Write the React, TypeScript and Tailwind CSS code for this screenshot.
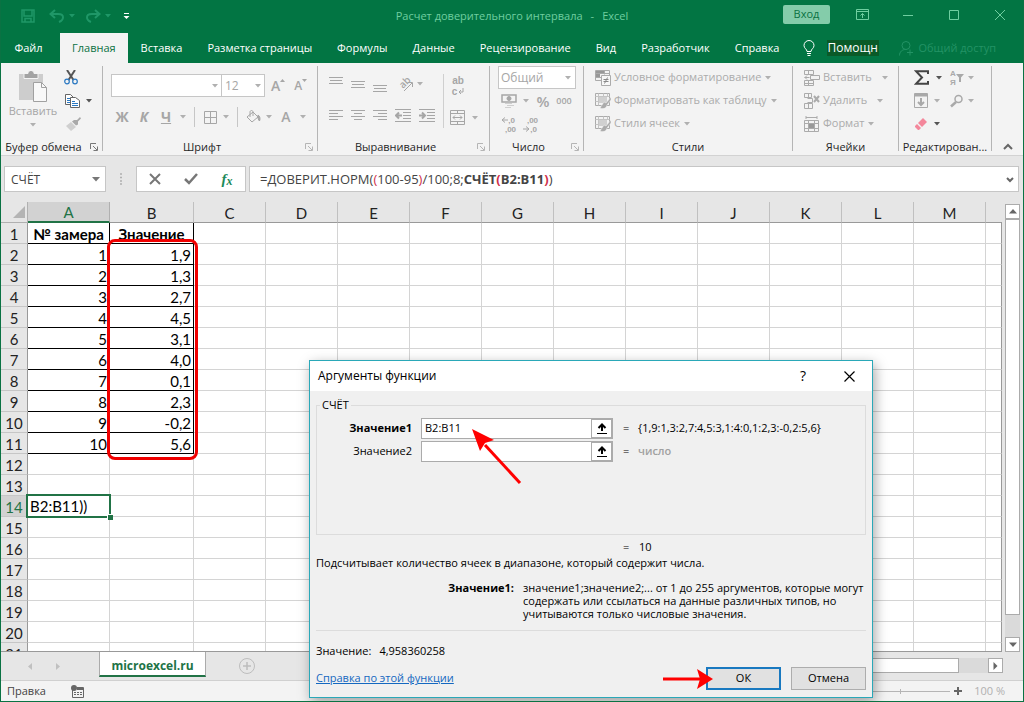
import { useState } from "react";
import type { ReactNode } from "react";

const tabs = [
  "Главная",
  "Вставка",
  "Разметка страницы",
  "Формулы",
  "Данные",
  "Рецензирование",
  "Вид",
  "Разработчик",
  "Справка",
];

const columns = ["A", "B", "C", "D", "E", "F", "G", "H", "I", "J", "K", "L", "M"];
const rowCount = 21;

const measurements = ["1,9", "1,3", "2,7", "4,5", "3,1", "4,0", "0,1", "2,3", "-0,2", "5,6"];

function Icon({
  w = 16,
  h = 16,
  className = "",
  children,
}: {
  w?: number;
  h?: number;
  className?: string;
  children: ReactNode;
}) {
  return (
    <svg
      width={w}
      height={h}
      viewBox={`0 0 ${w} ${h}`}
      fill="none"
      stroke="currentColor"
      className={`shrink-0 ${className}`}
      aria-hidden="true"
    >
      {children}
    </svg>
  );
}

function Caret({ className = "text-[#b0b0b0]" }: { className?: string }) {
  return (
    <Icon w={6} h={4} className={className}>
      <path d="M0 0h6L3 3.5z" fill="currentColor" stroke="none" />
    </Icon>
  );
}

function Tool({
  label,
  className = "",
  children,
}: {
  label: string;
  className?: string;
  children: ReactNode;
}) {
  return (
    <button aria-label={label} className={`flex items-center justify-center ${className}`}>
      {children}
    </button>
  );
}

function Group({
  title,
  width,
  launcher,
  children,
}: {
  title: string;
  width: string;
  launcher?: string;
  children: ReactNode;
}) {
  return (
    <section className={`flex shrink-0 pt-[3px] ${width}`}>
      <div className="flex min-w-0 flex-1 flex-col">
        <div className="h-[73px]">{children}</div>
        <div className="flex h-4 items-center">
          <h2 className="grow text-center whitespace-nowrap text-[#262626]">{title}</h2>
          {launcher && (
            <Tool label={`${title}: параметры`} className={`w-4 ${launcher}`}>
              <Icon w={8} h={8}>
                <path d="M.5 6V.5H6M3 3l4 4M7.5 3.5v4h-4" />
              </Icon>
            </Tool>
          )}
        </div>
      </div>
      <span className="h-[85px] w-px bg-[#b5b5b5]" />
    </section>
  );
}

function Lines({ widths, top = 0 }: { widths: [number, number][]; top?: number }) {
  return (
    <Icon w={14} h={16}>
      {widths.map(([x, w], i) => (
        <path key={i} d={`M${x} ${top + i * 3 + 0.5}h${w}`} />
      ))}
    </Icon>
  );
}

function TitleBar() {
  return (
    <div className="flex h-[33px] items-start text-[#6fcea0]">
      <div className="flex h-8 flex-1 items-center text-[#1f9767]">
        <Tool label="Сохранить" className="ml-[19px] w-4">
          <Icon w={14} h={14}>
            <path d="M1 1h12v12H1zM3 1v6h8V1M4 13V9.5h6V13" strokeWidth="1.5" />
          </Icon>
        </Tool>
        <Tool label="Отменить" className="ml-3 w-[18px]">
          <Icon w={16} h={14}>
            <path d="M6 1 1.5 5 6 9M2 5h7c7 0 6 6 1 8" strokeWidth="2" />
          </Icon>
        </Tool>
        <Tool label="Список отмены" className="w-3">
          <Caret className="text-[#1f9767]" />
        </Tool>
        <Tool label="Вернуть" className="ml-[6px] w-[18px]">
          <Icon w={16} h={14}>
            <path d="m10 1 4.5 4L10 9M14 5H7c-7 0-6 6-1 8" strokeWidth="2" />
          </Icon>
        </Tool>
        <Tool label="Список возврата" className="w-3">
          <Caret className="text-[#1f9767]" />
        </Tool>
        <Tool label="Настройка панели быстрого доступа" className="ml-1 w-4 text-white">
          <Icon w={7} h={8}>
            <path d="M1 1.5h5" />
            <path d="M.5 4h6l-3 3z" fill="currentColor" stroke="none" />
          </Icon>
        </Tool>
      </div>
      <h1 className="flex h-8 items-center gap-2">
        <span>Расчет доверительного интервала</span>
        <span>-</span>
        <span>Excel</span>
      </h1>
      <div className="flex flex-1 items-start justify-end">
        <button className="mt-[5px] mr-[9px] h-[19px] w-[47px] rounded-xs bg-[#84ccaa] text-[#0a7243]">
          Вход
        </button>
        <Tool label="Параметры отображения ленты" className="h-[29px] w-[46px]">
          <Icon w={13} h={11}>
            <path d="M.5.5h12v10H.5zM.5 2.5h12M6.5 9V4.5M4.5 6.5l2-2 2 2" />
          </Icon>
        </Tool>
        <Tool label="Свернуть" className="h-[29px] w-[46px]">
          <Icon w={10} h={10}>
            <path d="M0 5.5h10" />
          </Icon>
        </Tool>
        <Tool label="Развернуть" className="h-[29px] w-[46px]">
          <Icon w={10} h={10}>
            <path d="M.5.5h9v9h-9z" />
          </Icon>
        </Tool>
        <Tool label="Закрыть" className="h-[29px] w-[46px]">
          <Icon w={10} h={10}>
            <path d="m0 0 10 10M10 0 0 10" />
          </Icon>
        </Tool>
      </div>
    </div>
  );
}

function TabBar({ active, onSelect }: { active: string; onSelect: (tab: string) => void }) {
  return (
    <nav className="flex h-[30px] items-stretch text-white">
      <button className="w-[59px] shrink-0 pr-1">Файл</button>
      <div className="flex shrink-0 gap-px">
        {tabs.map((tab) => (
          <button
            key={tab}
            onClick={() => onSelect(tab)}
            className={`px-3 whitespace-nowrap ${active === tab ? "bg-[#f3f3f3] text-[#0a7243]" : ""}`}
          >
            {tab}
          </button>
        ))}
      </div>
      <label className="ml-3 flex items-center gap-3">
        <Icon w={12} h={16}>
          <path d="M4 11.5C4 9 1 8.5 1 5.5a5 5 0 0 1 10 0c0 3-3 3.5-3 6zM4 13.5h4M4.5 15.5h3" />
        </Icon>
        <input
          aria-label="Помощник"
          defaultValue="Помощн"
          className="h-4 w-[52px] bg-[#0a5a28] text-xs outline-none"
        />
      </label>
      <button className="ml-5 flex shrink-0 items-center gap-1 whitespace-nowrap text-[#239365]">
        <Icon w={15} h={15}>
          <circle cx="7" cy="4.5" r="4" />
          <path d="M.5 14.5c0-4 3-6 6-6M8 11.5h6M11 8.5v6" />
        </Icon>
        Общий доступ
      </button>
    </nav>
  );
}

function ClipboardGroup() {
  return (
    <Group title="Буфер обмена" width="w-[102px]" launcher="text-[#777]">
      <div className="flex">
        <button className="flex w-16 flex-col items-center pt-[5px] text-[#a6a6a6]">
          <Icon w={28} h={32}>
            <path d="M0 3h24v26H0z" fill="#cdcdcd" stroke="none" />
            <path d="M5 2.5h4c0-4 6-4 6 0h4v5H5z" fill="#a3a3a3" stroke="#f3f3f3" />
            <path d="M14.5 11.5h8l5 5v14h-13z" fill="#f8f8f8" stroke="#a0a0a0" />
            <path d="M22.5 11.5v5h5" stroke="#a0a0a0" />
          </Icon>
          <span className="leading-4">Вставить</span>
          <span className="pt-1">
            <Caret />
          </span>
        </button>
        <div className="flex flex-col items-start">
          <Tool label="Вырезать" className="h-[23px] w-3">
            <Icon w={14} h={15}>
              <path d="m3 0 6.5 10M11 0 4.5 10" stroke="#555" strokeWidth="2" />
              <circle cx="3" cy="11.5" r="2.3" stroke="#2a78c2" strokeWidth="1.2" />
              <circle cx="11" cy="11.5" r="2.3" stroke="#2a78c2" strokeWidth="1.2" />
            </Icon>
          </Tool>
          <Tool label="Копировать" className="h-[23px] gap-[6px]">
            <Icon w={15} h={14}>
              <path d="M.5.5h5l3 3v7h-8z" fill="#fff" stroke="#666" />
              <path d="M2 4.5h3M2 6.5h3M2 8.5h3" stroke="#2a78c2" />
              <path d="M5.5 3.5h5l4 3v7h-9z" fill="#fff" stroke="#666" />
              <path d="M7 7.5h3M7 9.5h6M7 11.5h6" stroke="#2a78c2" />
            </Icon>
            <Caret className="text-[#555]" />
          </Tool>
          <Tool label="Формат по образцу" className="h-[23px] w-4">
            <Icon w={15} h={14}>
              <path d="m8 3 3 0 3-3 1 1.5-3 3v3l-2 1-4-4z" fill="#a9a9a9" stroke="none" />
              <path d="m5 5 5 5-5 4-5-5z" fill="#cfcfcf" stroke="none" />
            </Icon>
          </Tool>
        </div>
      </div>
    </Group>
  );
}

function FontGroup() {
  return (
    <Group title="Шрифт" width="w-[215px]" launcher="text-[#b5b5b5]">
      <div className="flex h-[31px] items-end pt-2 pl-2 text-[#a6a6a6]">
        <span className="relative">
          <select
            aria-label="Шрифт"
            className="h-[23px] w-[111px] appearance-none border border-[#c6c6c6] bg-white"
          />
          <span className="pointer-events-none absolute top-[10px] right-1">
            <Caret />
          </span>
        </span>
        <span className="relative">
          <select
            aria-label="Размер шрифта"
            className="h-[23px] w-[43px] appearance-none border border-l-0 border-[#c6c6c6] bg-white pl-[3px] text-xs"
          >
            <option>12</option>
          </select>
          <span className="pointer-events-none absolute top-[10px] right-1">
            <Caret />
          </span>
        </span>
        <Tool label="Увеличить размер" className="ml-[6px] h-[23px]">
          <span className="text-sm font-semibold">A</span>
          <Icon w={5} h={16}>
            <path d="M0 4h5L2.5 1z" fill="currentColor" stroke="none" />
          </Icon>
        </Tool>
        <Tool label="Уменьшить размер" className="ml-[9px] h-[23px]">
          <span className="text-xs font-semibold">A</span>
          <Icon w={5} h={16}>
            <path d="M0 1h5L2.5 4z" fill="currentColor" stroke="none" />
          </Icon>
        </Tool>
      </div>
      <div className="flex h-[36px] items-center pt-1 pl-2 text-[#a6a6a6]">
        <Tool label="Полужирный" className="w-[22px] text-sm font-bold">
          Ж
        </Tool>
        <Tool label="Курсив" className="w-[22px] text-sm font-bold italic">
          К
        </Tool>
        <Tool label="Подчеркнутый" className="w-[22px] text-sm font-bold underline">
          Ч
        </Tool>
        <Tool label="Виды подчеркивания" className="w-3">
          <Caret />
        </Tool>
        <span className="mx-[5px] h-5 w-px bg-[#c6c6c6]" />
        <Tool label="Границы" className="w-5">
          <Icon w={13} h={13}>
            <path d="M.5.5h12v12H.5zM6.5.5v12M.5 6.5h12" />
          </Icon>
        </Tool>
        <Tool label="Виды границ" className="w-3">
          <Caret />
        </Tool>
        <span className="mx-[5px] h-5 w-px bg-[#c6c6c6]" />
        <Tool label="Цвет заливки" className="w-5">
          <Icon w={15} h={14}>
            <path d="m1 7 6-5 5 5-6 5zM4 7V2c0-2 3-2 3 0v4" />
            <path d="M12 5c2 1 2.5 4 1.5 6-1-1-2-3-1.5-6z" fill="currentColor" />
          </Icon>
        </Tool>
        <Tool label="Цвета заливки" className="w-3">
          <Caret />
        </Tool>
        <Tool label="Цвет текста" className="w-[22px] text-sm font-semibold">
          A
        </Tool>
        <Tool label="Цвета текста" className="w-3">
          <Caret />
        </Tool>
      </div>
    </Group>
  );
}

function AlignGroup() {
  return (
    <Group title="Выравнивание" width="w-[172px]" launcher="text-[#b5b5b5]">
      <div className="flex text-[#a6a6a6]">
        <div className="flex w-[125px] flex-col gap-2 pt-[10px] pl-[11px]">
          <div className="flex h-4 items-center gap-2">
            <Tool label="По верхнему краю">
              <Lines widths={[[0, 14], [1, 12], [0, 14]]} top={1} />
            </Tool>
            <Tool label="По середине">
              <Lines widths={[[0, 14], [1, 12], [0, 14]]} top={5} />
            </Tool>
            <Tool label="По нижнему краю">
              <Lines widths={[[0, 14], [1, 12], [0, 14]]} top={9} />
            </Tool>
            <Tool label="Ориентация" className="gap-[2px]">
              <Icon w={20} h={20}>
                <path d="m9 17 8-8M13 8.5h4.5V13" />
                <text
                  x="0"
                  y="0"
                  fontSize="10"
                  fontWeight="600"
                  fill="currentColor"
                  stroke="none"
                  transform="translate(8 15) rotate(-45)"
                >
                  ab
                </text>
              </Icon>
              <Caret />
            </Tool>
          </div>
          <div className="flex gap-2 pt-2">
            <Tool label="По левому краю">
              <Lines widths={[[0, 14], [0, 9], [0, 14], [0, 9]]} top={2} />
            </Tool>
            <Tool label="По центру">
              <Lines widths={[[0, 14], [3, 8], [0, 14], [3, 8]]} top={2} />
            </Tool>
            <Tool label="По правому краю">
              <Lines widths={[[0, 14], [5, 9], [0, 14], [5, 9]]} top={2} />
            </Tool>
            <Tool label="Уменьшить отступ">
              <Icon w={16} h={16}>
                <path d="M0 1.5h16M8 4.5h8M8 7.5h8M8 10.5h8M0 13.5h16" />
                <path d="M1 7.5h6M4 4.5l-3 3 3 3" strokeWidth="2" />
              </Icon>
            </Tool>
            <Tool label="Увеличить отступ">
              <Icon w={16} h={16}>
                <path d="M0 1.5h16M8 4.5h8M8 7.5h8M8 10.5h8M0 13.5h16" />
                <path d="M0 7.5h6M3 4.5l3 3-3 3" strokeWidth="2" />
              </Icon>
            </Tool>
          </div>
        </div>
        <div className="mt-2 flex h-[54px] flex-col gap-3 border-l border-[#cfcfcf] pl-[6px]">
          <Tool
            label="Перенести текст"
            className="h-6 w-4 flex-col font-['Liberation_Sans',sans-serif] text-[10px] leading-[11px] font-bold"
          >
            <span>ab</span>
            <span className="flex items-center gap-px">
              c
              <Icon w={6} h={7}>
                <path d="M5 0v4H1M3 2 1 4l2 2" />
              </Icon>
            </span>
          </Tool>
          <Tool label="Объединить и поместить в центре" className="gap-[7px]">
            <Icon w={15} h={15}>
              <path d="M.5.5h14v14H.5zM.5 3.5h14M.5 11.5h14M7.5.5v3M7.5 11.5v3M3 7.5h9M5 5.5l-2 2 2 2M10 5.5l2 2-2 2" />
            </Icon>
            <Caret />
          </Tool>
        </div>
      </div>
    </Group>
  );
}

function NumberGroup() {
  return (
    <Group title="Число" width="w-[94px]" launcher="text-[#b5b5b5]">
      <div className="pl-2 text-[#a6a6a6]">
        <span className="relative block">
          <select
            aria-label="Числовой формат"
            className="h-[23px] w-[78px] appearance-none border border-[#c6c6c6] bg-white pl-[2px] text-xs"
          >
            <option>Общий</option>
          </select>
          <span className="pointer-events-none absolute top-[10px] right-3">
            <Caret />
          </span>
        </span>
        <div className="flex h-6 items-center">
          <Tool label="Финансовый формат" className="ml-[3px] gap-[6px]">
            <Icon w={16} h={14}>
              <path d="M1 1h14v7H1z" strokeWidth="1.5" />
              <circle cx="8" cy="4.5" r="2" fill="currentColor" />
              <path d="M4 9.5h7M6 11.5h7M4 13.5h6" stroke="#cfcfcf" />
            </Icon>
            <Caret />
          </Tool>
          <Tool label="Процентный формат" className="ml-[6px] w-4 text-[15px] font-semibold">
            %
          </Tool>
          <Tool label="Формат с разделителями" className="ml-1 w-[18px] text-[9px] font-semibold">
            000
          </Tool>
        </div>
        <div className="flex h-[23px] items-center gap-[6px] pl-[2px] font-['Liberation_Sans',sans-serif] text-[8px] leading-[9px] font-bold">
          <Tool label="Увеличить разрядность" className="w-4 flex-col">
            <span className="flex items-center">
              <Icon w={7} h={6}>
                <path d="M1 3h6M4 .5 1 3l3 2.5" />
              </Icon>
              ,0
            </span>
            <span className="pl-[5px]">,00</span>
          </Tool>
          <Tool label="Уменьшить разрядность" className="w-4 flex-col">
            <span className="pl-[5px]">,00</span>
            <span className="flex items-center">
              <Icon w={7} h={6}>
                <path d="M0 3h6M3 .5 6 3 3 5.5" />
              </Icon>
              ,0
            </span>
          </Tool>
        </div>
      </div>
    </Group>
  );
}

function RowTool({ icon, text, gap = "gap-1" }: { icon: ReactNode; text: string; gap?: string }) {
  return (
    <button className={`flex h-[23px] items-center whitespace-nowrap text-[#ababab] ${gap}`}>
      <span className="flex items-center gap-[3px]">
        {icon}
        {text}
      </span>
      <Caret />
    </button>
  );
}

function BrushTable() {
  return (
    <Icon w={16} h={16}>
      <path d="M.5.5h14v12H.5z" />
      <path d="M4 4h8v6H4z" fill="#d0d0d0" stroke="none" />
      <path d="M.5 3.5h14M3.5.5v12M8.5.5v3M12.5.5v3M.5 8.5h3" stroke="#c4c4c4" />
      <path d="m16 4-5 6-2-1-4 6c3 1 6 1 7-3l4-5z" fill="currentColor" stroke="#f3f3f3" strokeWidth=".5" />
    </Icon>
  );
}

function StylesGroup() {
  return (
    <Group title="Стили" width="w-[209px]">
      <div className="flex flex-col pl-[11px]">
        <RowTool
          text="Условное форматирование"
          icon={
            <Icon w={16} h={16}>
              <path d="M.5.5h14v10H.5zM.5 3.5h14M.5 7.5h6M9.5.5v4" />
              <path d="M1 1h8v2H1zM1 4h4v3H1z" fill="#989898" stroke="none" />
              <path d="M6.5 5.5h9v10h-9z" fill="#f7f7f7" />
              <path d="M8.5 9.5h5M8.5 11.5h5M12.5 7.5l-3 6" stroke="#888" />
            </Icon>
          }
        />
        <RowTool text="Форматировать как таблицу" icon={<BrushTable />} />
        <RowTool text="Стили ячеек" icon={<BrushTable />} />
      </div>
    </Group>
  );
}

function CellsGroup() {
  return (
    <Group title="Ячейки" width="w-[106px]">
      <div className="flex flex-col pl-[11px]">
        <RowTool
          text="Вставить"
          gap="gap-[10px]"
          icon={
            <Icon w={16} h={16}>
              <path d="M.5.5h9v4h-9zM.5 10.5h9v5h-9zM4.5.5v4M4.5 10.5v5M.5 13.5h9" />
              <path d="M6.5 5.5h9v4h-9zM.5 7.5h5M3 5.5l-2 2 2 2" />
            </Icon>
          }
        />
        <RowTool
          text="Удалить"
          gap="gap-[10px]"
          icon={
            <Icon w={16} h={16}>
              <path d="M.5.5h7v4h-7zM.5 10.5h8v5h-8zM4.5.5v4M4.5 10.5v5M3.5 5.5h5v4h-5" />
              <path d="m10 3 5 6M15 3l-5 6" strokeWidth="2" />
            </Icon>
          }
        />
        <RowTool
          text="Формат"
          icon={
            <Icon w={16} h={16}>
              <path d="M2 1.5h11M2 0v3M13 0v3M.5 4.5h14v11H.5zM.5 7.5h14M.5 12.5h14M4.5 4.5v11M10.5 4.5v11" />
              <path d="M5 8h5v4H5z" fill="#999" stroke="none" />
            </Icon>
          }
        />
      </div>
    </Group>
  );
}

function EditGroup() {
  return (
    <Group title="Редактирован..." width="w-[93px]">
      <div className="grid grid-cols-[36px_28px] justify-items-start pl-[15px] text-[#a9a9a9]">
        <Tool label="Автосумма" className="h-[23px] gap-[6px]">
          <Icon w={16} h={15}>
            <path d="M14 4V1.2H2L8 7.5 2 13.8h12V11" stroke="#444" strokeWidth="2" />
          </Icon>
          <Caret className="text-[#555]" />
        </Tool>
        <Tool label="Сортировка и фильтр" className="h-[23px] gap-1">
          <span className="flex items-center">
            <span className="flex flex-col font-['Liberation_Sans',sans-serif] text-[8px] leading-[9px] font-bold">
              <span>А</span>
              <span>Я</span>
            </span>
            <Icon w={8} h={8}>
              <path d="M0 0h8L5 3.5V8H3V3.5z" fill="currentColor" stroke="none" />
            </Icon>
          </span>
          <Caret />
        </Tool>
        <Tool label="Заполнить" className="h-[23px] gap-[6px]">
          <Icon w={14} h={15}>
            <path d="M.5.5h13v14H.5zM.5 3h13" />
            <path d="M1 1h12v2H1z" fill="currentColor" stroke="none" />
            <path d="M7 5v7M4 9l3 3 3-3" strokeWidth="2" />
          </Icon>
          <Caret />
        </Tool>
        <Tool label="Найти и выделить" className="h-[23px] gap-[5px]">
          <Icon w={13} h={14}>
            <circle cx="8.5" cy="5" r="3.5" strokeWidth="1.5" />
            <path d="m6 8-5 4.5" strokeWidth="2.5" />
          </Icon>
          <Caret />
        </Tool>
        <Tool label="Очистить" className="h-[23px] gap-[6px]">
          <Icon w={14} h={14}>
            <path d="m9 1 4 4-5 5-4-4z" fill="#f4879b" stroke="none" />
            <path d="m3 7 4 4-2 2H4L1 10V9z" fill="#f4879b" stroke="none" />
          </Icon>
          <Caret className="text-[#555]" />
        </Tool>
      </div>
    </Group>
  );
}

function Ribbon() {
  return (
    <div className="flex h-[93px] items-stretch overflow-hidden border-b border-[#d2d2d2] bg-[#f3f3f3]">
      <ClipboardGroup />
      <FontGroup />
      <AlignGroup />
      <NumberGroup />
      <StylesGroup />
      <CellsGroup />
      <EditGroup />
      <div className="flex flex-1 items-end justify-center pb-1 text-[#666]">
        <Tool label="Свернуть ленту">
          <Icon w={10} h={8}>
            <path d="m1 6 4-4 4 4" strokeWidth="2" />
          </Icon>
        </Tool>
      </div>
    </div>
  );
}

function FormulaBar() {
  return (
    <div className="flex h-[46px] items-start bg-[#e6e6e6] pt-[10px] pr-1 pl-[3px] text-[#444]">
      <div className="flex h-[26px] w-[102px] items-center border border-[#c6c6c6] bg-white pt-px pr-[5px] pl-[6px]">
        <input aria-label="Имя" defaultValue="СЧЁТ" className="w-full min-w-0 text-xs outline-none" />
        <Icon w={8} h={5} className="text-[#777]">
          <path d="M0 0h8L4 4.5z" fill="currentColor" stroke="none" />
        </Icon>
      </div>
      <span className="flex h-[26px] w-[30px] items-center justify-center">
        <Icon w={2} h={12} className="text-[#b0b0b0]">
          <path d="M0 1h2M0 4.5h2M0 8h2M0 11h2" strokeWidth="1.5" />
        </Icon>
      </span>
      <div className="flex h-[26px] w-[110px] items-center border border-[#c6c6c6] bg-white">
        <Tool label="Отмена ввода" className="w-9 text-[#777]">
          <Icon w={12} h={12}>
            <path d="m1 1 10 10M11 1 1 11" strokeWidth="2" />
          </Icon>
        </Tool>
        <Tool label="Ввод" className="w-9 text-[#777]">
          <Icon w={14} h={12}>
            <path d="m1 6 4 4 8-9" strokeWidth="2.5" />
          </Icon>
        </Tool>
        <Tool
          label="Вставить функцию"
          className="w-9 font-['Liberation_Serif',serif] text-[15px] font-bold text-[#1d8a5a] italic"
        >
          f<span className="pt-1 text-xs">x</span>
        </Tool>
      </div>
      <div className="ml-[3px] flex h-[26px] flex-1 items-center border border-[#c6c6c6] bg-white pt-px pr-1 pl-[10px]">
        <div
          role="textbox"
          aria-label="Строка формул"
          contentEditable
          suppressContentEditableWarning
          className="flex-1 text-[13px] whitespace-nowrap outline-none"
        >
          =ДОВЕРИТ.НОРМ(<span className="text-[#d0304a]">(</span>100-95
          <span className="text-[#d0304a]">)</span>/100;8;
          <b>
            СЧЁТ<span className="text-[#d0304a]">(</span>B2:B11
            <span className="text-[#d0304a]">)</span>
          </b>
          )
        </div>
        <Tool label="Развернуть строку формул">
          <Icon w={8} h={6} className="text-[#666]">
            <path d="m1 1 3 3 3-3" strokeWidth="2" />
          </Icon>
        </Tool>
      </div>
    </div>
  );
}

function cellClass(row: number, col: number) {
  if (col > 1 || row > 11) return "border-[#d4d4d4]";
  return "border-black";
}

function Cell({ row, col }: { row: number; col: number }) {
  if (row === 1 && col < 2) return <b>{col === 0 ? "№ замера" : "Значение"}</b>;
  if (row > 1 && row < 12 && col === 0) return <>{row - 1}</>;
  if (row > 1 && row < 12 && col === 1) return <>{measurements[row - 2]}</>;
  return null;
}

function Sheet() {
  const rows = Array.from({ length: rowCount }, (_, i) => i + 1);

  return (
    <div className="flex min-h-0 flex-1 bg-[#e6e6e6]">
      <div className="relative min-w-0 flex-1 overflow-hidden border-b border-[#999]">
        <table className="w-full table-fixed border-separate border-spacing-0 bg-white font-[Lato,'Open_Sans',sans-serif] text-[15px] leading-[18px] text-black">
          <colgroup>
            <col className="w-[27px]" />
            <col className="w-[82px]" />
            <col className="w-[84px]" />
            {columns.slice(2).map((c) => (
              <col key={c} className="w-[72px]" />
            ))}
            <col />
          </colgroup>
          <thead>
            <tr className="h-[21px] bg-[#e6e6e6]">
              <th className="border-r border-b border-[#b0b0b0] p-0">
                <Icon w={12} h={12} className="mr-[2px] ml-auto">
                  <path d="M12 0v12H0z" fill="#b4b4b4" stroke="none" />
                </Icon>
              </th>
              {columns.map((c) => (
                <th
                  key={c}
                  scope="col"
                  className={`border-r p-0 font-normal ${
                    c === "A"
                      ? "border-b-2 border-r-[#b0b0b0] border-b-[#217346] bg-[#d2d2d2] pt-px text-[#217346]"
                      : "border-b border-r-[#c0c0c0] border-b-[#999] pt-px text-[#222]"
                  }`}
                >
                  {c}
                </th>
              ))}
              <th className="border-b border-[#999] p-0" />
            </tr>
          </thead>
          <tbody>
            {rows.map((row) => (
              <tr key={row} className="h-[21px]">
                <th
                  scope="row"
                  className={`border-r border-b border-r-[#999] border-b-[#c6c6c6] p-0 pt-px font-normal ${
                    row === 14 ? "bg-[#d2d2d2] text-[#217346]" : "bg-[#e6e6e6] text-[#222]"
                  }`}
                >
                  {row}
                </th>
                {columns.map((c, col) =>
                  row === 14 && col === 0 ? (
                    <td key={c} className="relative border-r border-b border-[#d4d4d4] p-0">
                      <input
                        aria-label="A14"
                        defaultValue="B2:B11))"
                        className="block h-5 w-full px-[2px] outline-2 outline-[#217346]"
                      />
                      <span className="absolute -right-1 -bottom-1 size-[6px] border-t border-l border-white bg-[#217346]" />
                    </td>
                  ) : (
                    <td
                      key={c}
                      className={`border-r border-b p-0 pt-px whitespace-nowrap ${cellClass(row, col)} ${
                        row === 1 ? "text-center" : "pr-[2px] text-right"
                      }`}
                    >
                      <Cell row={row} col={col} />
                    </td>
                  )
                )}
                <td className="border-r border-b border-r-[#999] border-b-[#d4d4d4] p-0" />
              </tr>
            ))}
          </tbody>
        </table>
        <div className="pointer-events-none absolute top-[37px] left-[106px] h-[221px] w-[91px] rounded-lg border-3 border-[#f00000]" />
      </div>
      <div className="flex w-[21px] flex-col items-center pt-[2px]">
        <Tool label="Вверх" className="h-[15px] w-[15px] border border-[#ababab] bg-white text-[#666]">
          <Icon w={8} h={5}>
            <path d="M0 4.5h8L4 0z" fill="currentColor" stroke="none" />
          </Icon>
        </Tool>
        <div className="flex w-[15px] flex-1 flex-col bg-[#dadada]">
          <div className="mb-[22px] flex-1 border border-[#ababab] bg-white" />
        </div>
        <Tool label="Вниз" className="h-[15px] w-[15px] border border-[#ababab] bg-white text-[#666]">
          <Icon w={8} h={5}>
            <path d="M0 .5h8L4 5z" fill="currentColor" stroke="none" />
          </Icon>
        </Tool>
      </div>
    </div>
  );
}

function SheetTabs() {
  return (
    <div className="flex h-7 shrink-0 items-start bg-[#e6e6e6] pr-5">
      <div className="flex h-7 w-[98px] items-center pl-[24px] text-[#c0c0c0]">
        <Tool label="Предыдущий лист" className="w-[10px]">
          <Icon w={4} h={7}>
            <path d="M4 0v7L0 3.5z" fill="currentColor" stroke="none" />
          </Icon>
        </Tool>
        <Tool label="Следующий лист" className="ml-[18px] w-[10px]">
          <Icon w={4} h={7}>
            <path d="M0 0v7l4-3.5z" fill="currentColor" stroke="none" />
          </Icon>
        </Tool>
      </div>
      <button className="h-[25px] w-[107px] border-x border-b-2 border-x-[#ababab] border-b-[#217346] bg-white pt-1 text-xs font-bold text-[#217346]">
        microexcel.ru
      </button>
      <Tool label="Новый лист" className="ml-[33px] h-7 text-[#bdbdbd]">
        <Icon w={16} h={16}>
          <circle cx="8" cy="8" r="7.5" />
          <path d="M8 4v8M4 8h8" strokeWidth="1.5" />
        </Icon>
      </Tool>
      <div className="mt-[6px] ml-auto flex h-[15px] w-[450px]">
        <div className="flex flex-1 bg-[#dadada]">
          <div className="mr-[29px] flex-1 border border-[#ababab] bg-white" />
        </div>
        <Tool label="Вправо" className="w-[15px] border border-[#ababab] bg-white text-[#666]">
          <Icon w={5} h={8}>
            <path d="M.5 0v8l4-4z" fill="currentColor" stroke="none" />
          </Icon>
        </Tool>
      </div>
    </div>
  );
}

function StatusBar() {
  return (
    <footer className="flex h-[21px] shrink-0 items-center border-t border-[#d0d0d0] bg-[#f3f3f3] pr-[18px] pl-[6px] text-[#444]">
      <span>Правка</span>
      <Tool label="Запись макроса" className="ml-[25px] text-[#666]">
        <Icon w={13} h={13}>
          <path d="M1.5 5v7.5h11v-10H6" />
          <path d="M6 3h6v2H6z" fill="currentColor" stroke="none" />
          <path d="M3 7.5h2M6 7.5h2M9 7.5h2M3 9.5h2M6 9.5h2M9 9.5h2" />
          <circle cx="3" cy="3" r="3" fill="currentColor" stroke="none" />
        </Icon>
      </Tool>
      <div className="ml-auto flex items-center gap-1">
        <Icon w={100} h={8} className="text-[#b5b5b5]">
          <path d="M0 4.5h100M50.5 2v5" />
        </Icon>
        <Tool label="Увеличить масштаб" className="text-[#666]">
          <Icon w={8} h={8}>
            <path d="M4 0v8M0 4h8" strokeWidth="2" />
          </Icon>
        </Tool>
        <span className="ml-2 text-[#b0b0b0]">100 %</span>
      </div>
    </footer>
  );
}

function ArgumentRow({
  id,
  label,
  value,
  result,
  strong,
}: {
  id: string;
  label: string;
  value: string;
  result: string;
  strong?: boolean;
}) {
  return (
    <div className="flex h-[21px] items-center">
      <label htmlFor={id} className={`w-[95px] text-right ${strong ? "font-bold" : ""}`}>
        {label}
      </label>
      <div className="ml-[9px] flex h-[21px] w-[192px] border border-[#ababab] bg-white">
        <input id={id} defaultValue={value} className="min-w-0 flex-1 px-[3px] outline-none" />
        <Tool
          label={`Выбрать диапазон: ${label}`}
          className="w-[21px] border border-[#ababab] text-black"
        >
          <Icon w={10} h={11}>
            <path d="M5 8V2M1.5 5 5 1.5 8.5 5" strokeWidth="2" />
            <path d="M0 10.5h10" />
          </Icon>
        </Tool>
      </div>
      <span className="ml-[10px] w-[15px]">=</span>
      <span className={strong ? "" : "font-semibold text-[#a0a0a0]"}>{result}</span>
    </div>
  );
}

function FunctionDialog() {
  return (
    <div
      role="dialog"
      aria-label="Аргументы функции"
      className="absolute top-[360px] left-[308px] w-[564px] border border-[#2aa8b8] bg-[#f0f0f0] text-black shadow-[2px_4px_12px_rgba(0,0,0,0.35)]"
    >
      <header className="flex h-[30px] items-center bg-white pl-2 text-xs">
        <h2 className="flex-1">Аргументы функции</h2>
        <button aria-label="Справка" className="w-[46px] text-sm">
          ?
        </button>
        <Tool label="Закрыть окно" className="w-[46px]">
          <Icon w={11} h={11}>
            <path d="m.5.5 10 10M10.5.5l-10 10" strokeWidth="1.2" />
          </Icon>
        </Tool>
      </header>
      <div className="px-[6px] pt-[7px] pb-[7px]">
        <fieldset className="h-[137px] border border-[#dcdcdc]">
          <legend className="ml-[3px] px-[2px] leading-[14px]">СЧЁТ</legend>
          <div className="flex flex-col gap-[2px] pt-[6px]">
            <ArgumentRow
              id="arg1"
              label="Значение1"
              value="B2:B11"
              result="{1,9:1,3:2,7:4,5:3,1:4:0,1:2,3:-0,2:5,6}"
              strong
            />
            <ArgumentRow id="arg2" label="Значение2" value="" result="число" />
          </div>
        </fieldset>
        <div className="flex pt-1 pl-[307px] leading-4">
          <span className="w-4">=</span>
          <span>10</span>
        </div>
        <p className="leading-4">Подсчитывает количество ячеек в диапазоне, который содержит числа.</p>
        <div className="flex gap-[9px] pt-[10px] leading-[13px]">
          <b className="w-[198px] text-right">Значение1:</b>
          <p className="flex-1">
            значение1;значение2;... от 1 до 255 аргументов, которые могут
            <br />
            содержать или ссылаться на данные различных типов, но
            <br />
            учитываются только числовые значения.
          </p>
        </div>
        <p className="mt-[10px] flex gap-2 border-t border-[#dcdcdc] pt-3 leading-4">
          <span>Значение:</span>
          <span>4,958360258</span>
        </p>
        <div className="flex items-center gap-[10px] pt-2">
          <a href="#help" className="mr-auto text-[#1468c0] underline">
            Справка по этой функции
          </a>
          <button className="h-[23px] w-[75px] border-2 border-[#1979c0] bg-[#e1e1e1]">ОК</button>
          <button className="h-[23px] w-[75px] border border-[#adadad] bg-[#e1e1e1]">Отмена</button>
        </div>
      </div>
      <svg
        width="52"
        height="58"
        viewBox="0 0 52 58"
        className="pointer-events-none absolute top-[67px] left-[161px]"
        aria-hidden="true"
      >
        <path d="m14 17 35 38" stroke="#f00" strokeWidth="3" />
        <path d="m1 1 22 11-9 3-5 8z" fill="#f00" />
      </svg>
      <svg
        width="52"
        height="20"
        viewBox="0 0 52 20"
        className="pointer-events-none absolute top-[308px] left-[352px]"
        aria-hidden="true"
      >
        <path d="M1 10h40" stroke="#f00" strokeWidth="3" />
        <path d="m51 10-16 10 3-10-3-10z" fill="#f00" />
      </svg>
    </div>
  );
}

export default function App() {
  const [tab, setTab] = useState("Главная");

  return (
    <div className="relative flex h-screen min-h-[400px] flex-col overflow-hidden border-x border-b border-[#0a7243] bg-white font-['Open_Sans','Noto_Sans',sans-serif] text-[11px]">
      <header className="shrink-0 bg-[#027543]">
        <TitleBar />
        <TabBar active={tab} onSelect={setTab} />
      </header>
      <div className="shrink-0">
        <Ribbon />
        <FormulaBar />
      </div>
      <Sheet />
      <SheetTabs />
      <StatusBar />
      <FunctionDialog />
    </div>
  );
}
